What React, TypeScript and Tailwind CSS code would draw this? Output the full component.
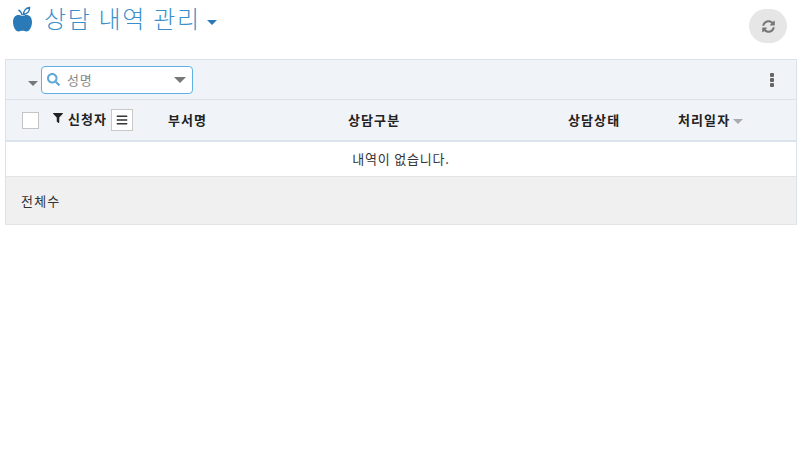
import React from 'react'
import { FaFilter, FaBars, FaSearch, FaSyncAlt } from 'react-icons/fa'

const Caret = ({ className }: { className: string }) => (
  <span className={`inline-block w-0 h-0 border-x-[5px] border-x-transparent border-t-[5px] ${className}`} />
)

const AppleIcon = () => (
  <svg viewBox="0 0 21 27" className="mt-[5px] w-[21px] h-[27px] shrink-0">
    <path d="M1 17 C1 12.5 3.5 10 6.5 10 C8.2 10 9.3 10.8 10.5 10.8 C11.7 10.8 12.8 10 14.5 10 C17.5 10 20 12.5 20 17 C20 21.5 17.5 26.5 14.5 26.5 C12.8 26.5 12 25.8 10.5 25.8 C9 25.8 8.2 26.5 6.5 26.5 C3.5 26.5 1 21.5 1 17 Z" fill="#2b7ab8" />
    <path d="M11.5 9.5 C11.5 6 13.8 3 17.5 2.5 C17.8 6 15.5 9 11.5 9.5 Z" fill="none" stroke="#2b7ab8" strokeWidth="1.5" />
    <path d="M6.5 5 C8.3 6 9.6 7.5 10.3 10" fill="none" stroke="#2b7ab8" strokeWidth="1.5" />
  </svg>
)

export default function App() {
  return (
    <div className="w-[803px] h-[476px] bg-white overflow-hidden font-['Noto_Sans_CJK_KR',sans-serif] text-[13px] tracking-[0.8px] text-[#333]">
      <div className="h-[59px] flex justify-between pl-[12px] pr-[16px]">
        <div className="flex items-start">
          <AppleIcon />
          <span className="ml-[11px] text-[24px] leading-[35px] tracking-[1.7px] font-light text-[#3a8fcb]">상담 내역 관리</span>
          <Caret className="ml-[6px] mt-[20px] border-t-[#2a7ab8]" />
        </div>
        <div className="mt-[9px] w-[38px] h-[34px] rounded-full bg-[#e6e6e6] flex items-center justify-center">
          <FaSyncAlt className="w-[13px] h-[13px] text-[#777]" />
        </div>
      </div>
      <div className="mx-[5px] w-[792px] border border-[#dbe1e8] border-b-[#e4e4e4]">
        <div className="h-[40px] bg-[#f0f3f8] border-b border-[#dbe1e8] flex items-center">
          <Caret className="ml-[22px] mt-[8px] border-t-[#777]" />
          <div className="ml-[3px] w-[152px] h-[28px] bg-white border border-[#5fb0e3] rounded-[4px] flex items-center pl-[5px] pr-[6px]">
            <FaSearch className="w-[13px] h-[13px] text-[#5fa8d8]" />
            <span className="ml-[7px] text-[#888] flex-1">성명</span>
            <Caret className="border-x-[6px] border-t-[6px] border-t-[#777]" />
          </div>
          <div className="ml-auto mr-[22px] flex flex-col gap-[1px]">
            <span className="w-[4px] h-[4px] rounded-[1px] bg-[#666]" />
            <span className="w-[4px] h-[4px] rounded-[1px] bg-[#666]" />
            <span className="w-[4px] h-[4px] rounded-[1px] bg-[#666]" />
          </div>
        </div>
        <div className="h-[42px] bg-[#f0f3f8] border-b-2 border-[#dbe3ec] flex items-center font-bold tracking-[1.1px] text-[#222]">
          <span className="ml-[16px] w-[17px] h-[17px] bg-white border border-[#c4c4c4]" />
          <FaFilter className="ml-[14px] mt-[-4px] w-[10px] h-[10px] text-[#222]" />
          <span className="ml-[5px] mt-[-3px] w-[43px] whitespace-nowrap">신청자</span>
          <span className="w-[22px] h-[22px] bg-white border border-[#c8c8c8] flex items-center justify-center">
            <FaBars className="w-[12px] h-[12px] text-[#333]" />
          </span>
          <span className="ml-[35px] w-[180px]">부서명</span>
          <span className="w-[220px]">상담구분</span>
          <span className="w-[110px]">상담상태</span>
          <span>처리일자</span>
          <Caret className="ml-[3px] mt-[3px] border-t-[#aaa]" />
        </div>
        <div className="h-[35px] bg-white border-b border-[#e4e4e4] flex items-center justify-center">내역이 없습니다.</div>
        <div className="h-[47px] bg-[#f0f0f0] flex items-center pl-[15px] tracking-[1.2px]">전체수</div>
      </div>
    </div>
  )
}
